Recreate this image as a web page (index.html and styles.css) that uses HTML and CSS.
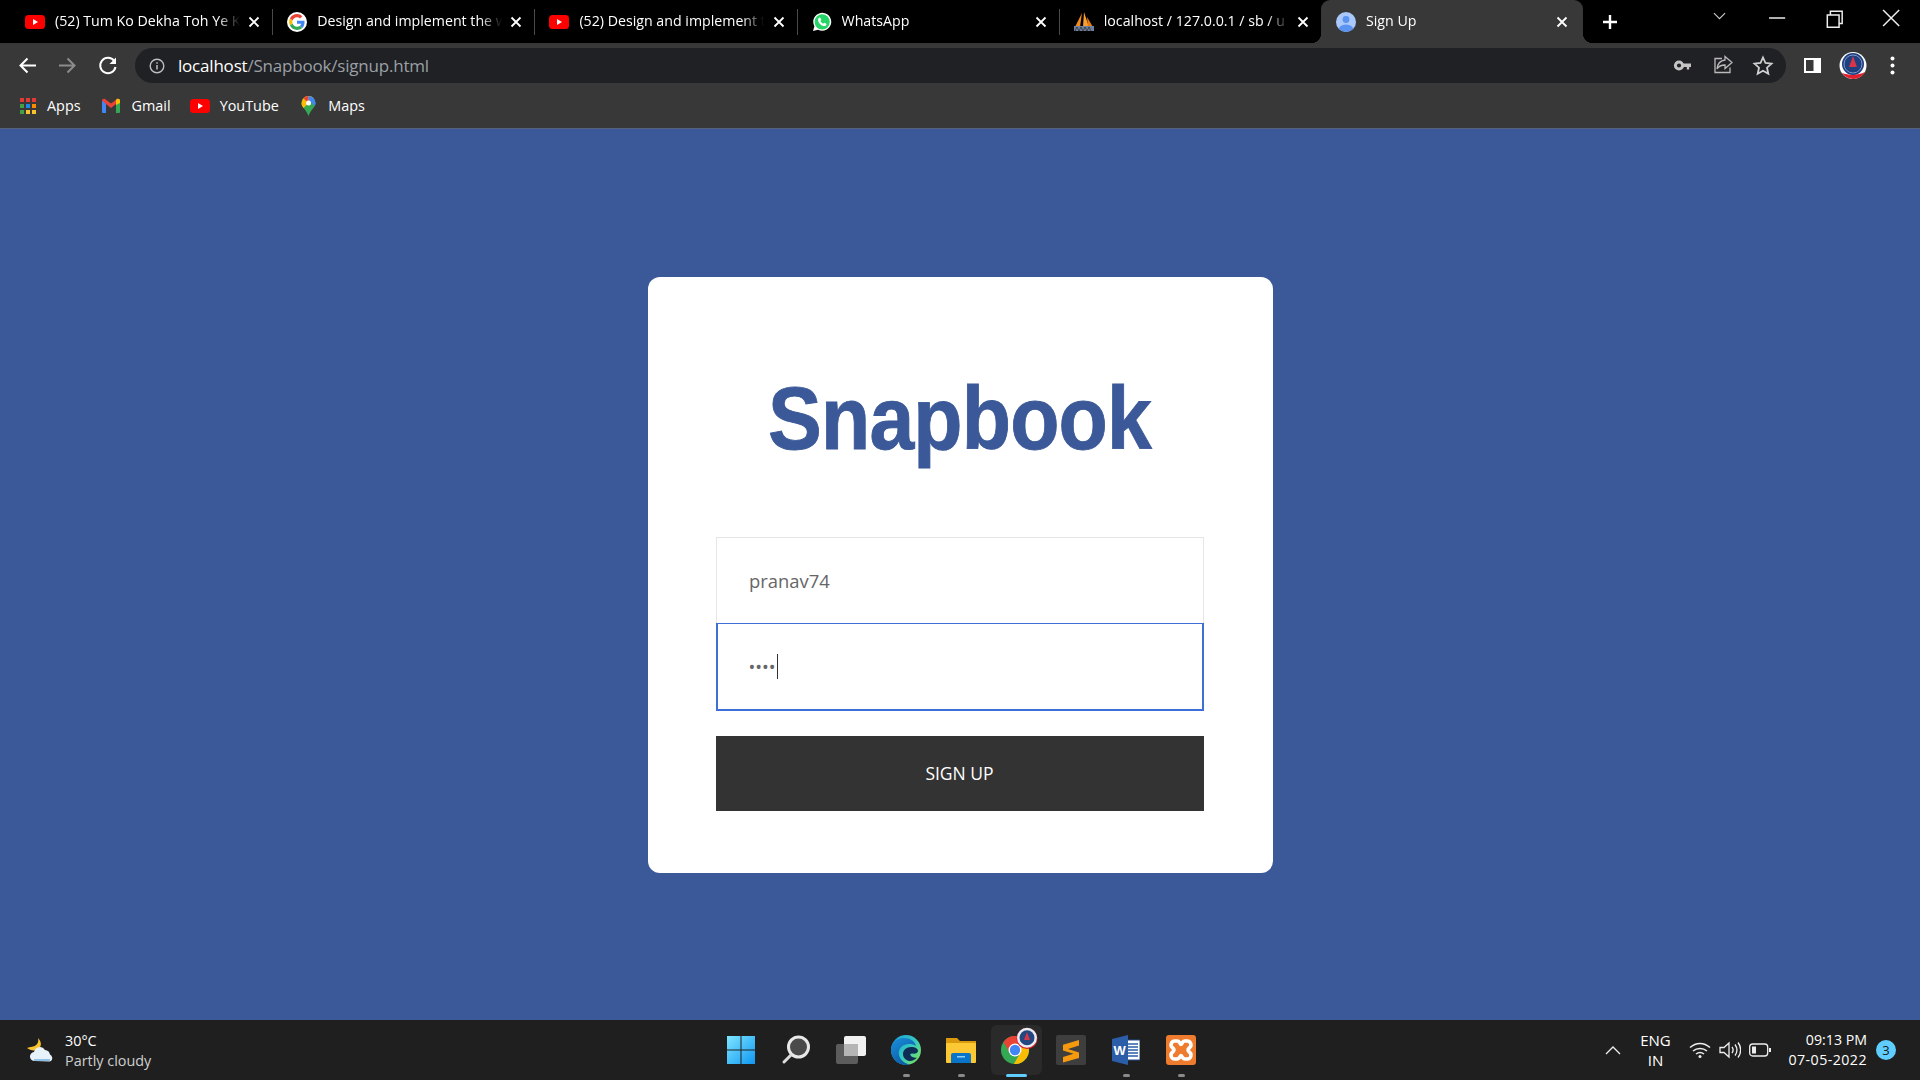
FILE: index.html
```html
<!DOCTYPE html>
<html lang="en">
<head>
<meta charset="utf-8">
<title>Sign Up</title>
<link rel="stylesheet" href="styles.css">
</head>
<body>
<svg class="defs" aria-hidden="true">
  <symbol id="yt" viewBox="0 0 20 14"><rect width="20" height="14" rx="3.5" fill="#f00"/><path d="M8 4l5 3-5 3z" fill="#fff"/></symbol>
  <symbol id="x" viewBox="0 0 12 12"><path d="M1.5 1.5l9 9M10.5 1.5l-9 9" stroke="#fff" stroke-width="1.8" fill="none"/></symbol>
</svg>

<header class="tabstrip">
  <div class="tab">
    <svg class="fav"><use href="#yt" y="3" width="20" height="14"/></svg>
    <span class="tab-title">(52) Tum Ko Dekha Toh Ye K</span>
    <svg class="tab-x"><use href="#x"/></svg>
  </div>
  <div class="tab">
    <svg class="fav" viewBox="0 0 48 48"><circle cx="24" cy="24" r="24" fill="#fff"/><g transform="translate(5 5) scale(.79)"><path fill="#EA4335" d="M24 9.5c3.54 0 6.71 1.22 9.21 3.6l6.85-6.85C35.9 2.38 30.47 0 24 0 14.62 0 6.51 5.38 2.56 13.22l7.98 6.19C12.43 13.72 17.74 9.5 24 9.5z"/><path fill="#4285F4" d="M46.98 24.55c0-1.57-.15-3.09-.38-4.55H24v9.02h12.94c-.58 2.96-2.26 5.48-4.78 7.18l7.73 6c4.51-4.18 7.09-10.36 7.09-17.65z"/><path fill="#FBBC05" d="M10.53 28.59c-.48-1.45-.76-2.99-.76-4.59s.27-3.14.76-4.59l-7.98-6.19C.92 16.46 0 20.12 0 24c0 3.88.92 7.54 2.56 10.78l7.97-6.19z"/><path fill="#34A853" d="M24 48c6.48 0 11.93-2.13 15.89-5.81l-7.73-6c-2.15 1.45-4.92 2.3-8.16 2.3-6.26 0-11.57-4.22-13.47-9.91l-7.98 6.19C6.51 42.62 14.62 48 24 48z"/></g></svg>
    <span class="tab-title">Design and implement the w</span>
    <svg class="tab-x"><use href="#x"/></svg>
  </div>
  <div class="tab">
    <svg class="fav"><use href="#yt" y="3" width="20" height="14"/></svg>
    <span class="tab-title">(52) Design and implement t</span>
    <svg class="tab-x"><use href="#x"/></svg>
  </div>
  <div class="tab">
    <svg class="fav" viewBox="0 0 20 20"><path d="M1 19l1.4-4.8A9 9 0 1 1 6 17.7z" fill="#fff"/><circle cx="10.2" cy="9.8" r="7.6" fill="#25d366"/><path d="M7.6 5.6c-.5 0-1.5.8-1.5 2.3 0 2.800 3.300 6.100 6.100 6.100 1.500 0 2.300-1 2.300-1.600 0-.6-1.900-1.600-2.300-1.600-.4 0-.8.900-1.100.9-.8-.1-2.500-1.800-2.600-2.600 0-.3.800-.7.800-1.100 0-.5-1-2.400-1.700-2.400z" fill="#fff"/></svg>
    <span class="tab-title">WhatsApp</span>
    <svg class="tab-x"><use href="#x"/></svg>
  </div>
  <div class="tab">
    <svg class="fav" viewBox="0 0 20 20"><path d="M8 1L1 15h5z" fill="#f08a1d"/><path d="M10 0l-1 15h6z" fill="#f9a030"/><path d="M13 5l1 10h5z" fill="#e57a12"/><rect y="14" width="20" height="5" fill="#6d7f9f"/><path d="M1 19l2-4 2 4 2-4 2 4 2-4 2 4 2-4 2 4" stroke="#333" stroke-width=".8" fill="none"/></svg>
    <span class="tab-title">localhost / 127.0.0.1 / sb / u</span>
    <svg class="tab-x"><use href="#x"/></svg>
  </div>
  <div class="tab tab-active">
    <svg class="fav" viewBox="0 0 20 20"><defs><clipPath id="c"><circle cx="10" cy="10" r="10"/></clipPath></defs><circle cx="10" cy="10" r="10" fill="#aac8fa"/><g clip-path="url(#c)" fill="#5a93f0"><circle cx="10" cy="7.500" r="3.400"/><ellipse cx="10" cy="18" rx="7.500" ry="5.500"/></g></svg>
    <span class="tab-title">Sign Up</span>
    <svg class="tab-x"><use href="#x"/></svg>
  </div>
  <svg class="newtab" viewBox="0 0 16 16"><path d="M8 1v14M1 8h14" stroke="#fff" stroke-width="2.400"/></svg>
  <div class="win-controls">
    <svg class="win-btn" viewBox="0 0 46 24"><path d="M18.500 8l4.500 4.500L27.500 8" stroke="#ccc" fill="none" stroke-width=".9"/></svg>
    <svg class="win-btn" viewBox="0 0 46 24"><path d="M17 12h13" stroke="#eee" fill="none" stroke-width="1.200"/></svg>
    <svg class="win-btn" viewBox="0 0 46 24"><path d="M18 9.500h9.500v10H18zM20.500 9.500V6.500H30v10h-2.500" stroke="#eee" fill="none" stroke-width="1.200"/></svg>
    <svg class="win-btn" viewBox="0 0 46 24"><path d="M17 5.500l13 13M30 5.500l-13 13" stroke="#eee" fill="none" stroke-width="1.200"/></svg>
  </div>
</header>

<section class="toolbar">
  <div class="navrow">
    <svg class="nav-btn" viewBox="0 0 40 35"><path d="M28 17.500H13M19.500 10.500l-7 7 7 7" stroke="#fff" stroke-width="2" fill="none"/></svg>
    <svg class="nav-btn" viewBox="0 0 40 35"><path d="M11 17.500h15M19.500 10.500l7 7-7 7" stroke="#8c8c8c" stroke-width="2" fill="none"/></svg>
    <svg class="nav-btn" viewBox="0 0 40 35"><path d="M26.200 13a7.700 7.700 0 1 0 1.300 6" stroke="#fff" stroke-width="2" fill="none"/><path d="M28 9.500v6.500h-6.500z" fill="#fff"/></svg>
    <div class="omnibox">
      <svg class="info" viewBox="0 0 16 16"><circle cx="8" cy="8" r="6.800" stroke="#bdbdbd" stroke-width="1.400" fill="none"/><path d="M8 7v4.500M8 4.200v1.600" stroke="#bdbdbd" stroke-width="1.500"/></svg>
      <span class="url"><span class="url-host">localhost</span>/Snapbook/signup.html</span>
      <span class="omni-spacer"></span>
      <svg class="omni-btn" viewBox="0 0 40 35"><circle cx="16" cy="17.500" r="3.600" stroke="#c4c4c4" stroke-width="3" fill="none"/><path d="M19 15.500h9v3.500h-1.800v2.500h-2.400V19H19z" fill="#c4c4c4"/></svg>
      <svg class="omni-btn" viewBox="0 0 40 35"><path d="M19 10.500H12v14h15v-5" stroke="#bbb" stroke-width="1.300" fill="none"/><path d="M22 8.500l7 6-7 6v-3.500c-4 0-6.500 1.500-8 4 .5-5 3.500-8.500 8-9z" stroke="#bbb" stroke-width="1.300" fill="none"/></svg>
      <svg class="omni-btn" viewBox="0 0 40 35"><path d="M20 9.500l2.500 5.500 6 .7-4.500 4 1.300 6-5.300-3-5.300 3 1.300-6-4.500-4 6-.7z" stroke="#d0d0d0" stroke-width="1.800" fill="none"/></svg>
    </div>
    <svg class="tool-btn" viewBox="0 0 40 35"><rect x="11" y="10" width="17" height="15" fill="#fff"/><rect x="13" y="12" width="7.500" height="11" fill="#383838"/></svg>
    <svg class="tool-btn" viewBox="0 0 40 35"><circle cx="20" cy="17.500" r="13.500" fill="#fff"/><path d="M9 25a13.500 13.500 0 0 0 23-1c-6 3-15 4-23 1z" fill="#e1202f"/><circle cx="20" cy="16" r="11" fill="#1f3f7e"/><path d="M20 8l4 11h-8z" fill="#d8344a"/><circle cx="20" cy="16" r="9" stroke="#7d98c9" stroke-width="1" fill="none"/></svg>
    <svg class="tool-btn" viewBox="0 0 40 35"><circle cx="19.500" cy="10.500" r="2" fill="#fff"/><circle cx="19.500" cy="17.500" r="2" fill="#fff"/><circle cx="19.500" cy="24.500" r="2" fill="#fff"/></svg>
  </div>
  <nav class="bookmarks">
    <a class="bm">
      <svg class="bm-icon" viewBox="0 0 18 18"><path fill="#e53935" d="M1 1h4v4H1zM7 1h4v4H7zM13 1h4v4h-4z"/><path fill="#43a047" d="M1 7h4v4H1z"/><path fill="#1e88e5" d="M7 7h4v4H7z"/><path fill="#fb8c00" d="M13 7h4v4h-4z"/><path fill="#43a047" d="M1 13h4v4H1z"/><path fill="#fbc02d" d="M7 13h4v4H7zM13 13h4v4h-4z"/></svg>
      Apps
    </a>
    <a class="bm bm-gmail">
      <svg class="bm-icon" viewBox="0 0 18 18"><path fill="#4285f4" d="M0 4h4v12H1a1 1 0 0 1-1-1z"/><path fill="#34a853" d="M14 4h4v11a1 1 0 0 1-1 1h-3z"/><path fill="#ea4335" d="M0 3.500c0-1.500 1.800-2.300 3-1.400l6 4.500 6-4.500c1.200-.9 3-.1 3 1.400L14 7 9 11 4 7z"/><path fill="#fbbc04" d="M14 2.800l1-.7c1.200-.9 3-.1 3 1.400V6l-4 2z"/></svg>
      Gmail
    </a>
    <a class="bm bm-yt">
      <svg class="bm-icon bm-wide"><use href="#yt" y="2" width="20" height="14"/></svg>
      YouTube
    </a>
    <a class="bm">
      <svg class="bm-icon bm-map" viewBox="0 0 14 20"><path d="M7 0a7 7 0 0 1 7 7c0 4-4.500 6.500-7 13-2.500-6.500-7-9-7-13a7 7 0 0 1 7-7z" fill="#34a853"/><path d="M2 2.200A7 7 0 0 1 12 2L2 12C.5 10.500 0 8.500 0 7a7 7 0 0 1 2-4.800z" fill="#fbbc04"/><path d="M2 2.200A7 7 0 0 1 7 0v4.500a2.500 2.500 0 0 0-2 1z" fill="#ea4335"/><path d="M7 0a7 7 0 0 1 7 7c0 1-.3 2-.8 3L9 5.500A2.500 2.500 0 0 0 7 4.500z" fill="#4285f4"/><circle cx="7" cy="7" r="2.500" fill="#fff"/></svg>
      Maps
    </a>
  </nav>
</section>

<main class="page">
  <form class="card">
    <div class="logo"><span class="logo-text">Snapbook</span></div>
    <input class="field" type="text" value="pranav74" aria-label="Username">
    <div class="field-wrap">
      <input class="field field-focus" type="password" value="pass" aria-label="Password">
      <span class="caret"></span>
    </div>
    <button class="submit" type="button">SIGN UP</button>
  </form>
</main>

<footer class="taskbar">
  <div class="weather">
    <svg class="weather-icon" viewBox="0 0 28 26"><path d="M11 1c1 5-1 8-7 9 0 0-2 .3-4 1 3 2 6 3 9 2 5-1 7-7 2-12z" fill="#f8c32c"/><path d="M8 24a4.500 4.500 0 0 1-1-9 6 6 0 0 1 11-2 5.500 5.500 0 0 1 5 4.500 4 4 0 0 1 1 6.500c-.5.300-1 .5-1.500.5z" fill="#e8f2fa"/><path d="M7 23h16" stroke="#8fc0e6" stroke-width="2"/></svg>
    <div class="weather-text">
      <span class="temp">30°C</span>
      <span class="cond">Partly cloudy</span>
    </div>
  </div>
  <div class="apps">
    <div class="app">
      <svg class="app-icon" viewBox="0 0 30 30"><defs><linearGradient id="w" x1="0" y1="0" x2="1" y2="1"><stop offset="0" stop-color="#7fe6ff"/><stop offset="1" stop-color="#0f97f2"/></linearGradient></defs><path fill="url(#w)" d="M1 1h13.500v13.500H1zM15.500 1H29v13.500H15.500zM1 15.500h13.500V29H1zM15.500 15.500H29V29H15.500z"/></svg>
    </div>
    <div class="app">
      <svg class="app-icon" viewBox="0 0 30 30"><circle cx="17.500" cy="12" r="10" fill="#4a4a4a" stroke="#e8e8e8" stroke-width="3"/><path d="M10 20l-7 7" stroke="#ddd" stroke-width="3" stroke-linecap="round"/></svg>
    </div>
    <div class="app">
      <svg class="app-icon" viewBox="0 0 30 30"><rect x="0" y="9" width="22" height="20" rx="2" fill="#5c5c5c"/><rect x="8" y="1" width="22" height="20" rx="2" fill="#f1f1f1"/><rect x="8" y="9" width="14" height="12" fill="#b5b5b5"/></svg>
    </div>
    <div class="app">
      <svg class="app-icon" viewBox="0 0 30 30"><defs><linearGradient id="e2" x1="0" y1="0" x2="1" y2=".8"><stop offset="0" stop-color="#1b9fdc"/><stop offset=".6" stop-color="#36c9c0"/><stop offset="1" stop-color="#7ae25f"/></linearGradient><linearGradient id="e1" x1="0" y1="0" x2=".6" y2="1"><stop offset="0" stop-color="#1a8fdc"/><stop offset="1" stop-color="#0c59a4"/></linearGradient></defs><circle cx="15" cy="15" r="15" fill="url(#e2)"/><path d="M1 10C3 5 8 3 13 3c6 0 11 3 12 8-3-2-7-2.500-10-1.500C10 10.500 7 15 8 20c1 4.500 5 8.500 11 9.500-1.300.3-2.700.5-4 .5C6.700 30 0 23.300 0 15c0-1.700.3-3.400 1-5z" fill="url(#e1)"/><path d="M12 19c0-4 3.500-7 8-7 4 0 7 1.500 7 4 0 2-3 3-5.500 2.500-2-.3-3 .7-1.500 2.500 1.500 1.500 4 2 6 1.500-2 2.500-5 4-8 3.500-3.500-1-6-3.500-6-7z" fill="#0f2c55"/></svg>
    </div>
    <div class="app">
      <svg class="app-icon" viewBox="0 0 30 30"><path d="M0 3h11l3 3h16v6H0z" fill="#d99a0e"/><rect y="8" width="30" height="20" rx="1" fill="#fcc934"/><path d="M5 28v-8a2 2 0 0 1 2-2h16a2 2 0 0 1 2 2v8z" fill="#0a74c9"/><rect x="11" y="21" width="8" height="1.500" fill="#8fd0f5"/></svg>
    </div>
    <div class="app app-active">
      <svg class="app-icon-lg" viewBox="0 0 40 40"><circle cx="19" cy="22" r="14" fill="#34a853"/><path fill="#ea4335" d="M19 16H31.650A14 14 0 0 0 7.480 14.050L13.800 25A6 6 0 0 1 19 16z"/><path fill="#fbbc04" d="M24.200 25L17.870 35.950A14 14 0 0 0 31.650 16H19A6 6 0 0 1 24.200 25z"/><circle cx="19" cy="22" r="6.500" fill="#fff"/><circle cx="19" cy="22" r="5.200" fill="#4285f4"/><circle cx="31" cy="10.500" r="10.500" fill="#d81f2e"/><circle cx="31" cy="9.800" r="10" fill="#e9edf4"/><circle cx="31" cy="9.800" r="7.500" fill="#24477f"/><path d="M31 4l3 8h-6z" fill="#d8344a"/></svg>
    </div>
    <div class="app">
      <svg class="app-icon" viewBox="0 0 30 30"><rect width="30" height="30" rx="2" fill="#3e3e3e"/><path d="M23 5v5.500L12 14l11 3.500v5.500L7 27.500V22l10.500-3.300L7 15.500V9.800z" fill="#f59a0f"/></svg>
    </div>
    <div class="app">
      <svg class="app-icon-word" viewBox="0 0 28 30"><rect x="13" y="5" width="15" height="20" fill="#fff" stroke="#1f4d91" stroke-width="1"/><path d="M16 9h10M16 12h10M16 15h10M16 18h10M16 21h10" stroke="#2b5da8" stroke-width="1.300"/><path d="M0 4l16-4v30L0 26z" fill="#2b5da8"/><text class="word-w" x="1.500" y="19.500">W</text></svg>
    </div>
    <div class="app">
      <svg class="app-icon" viewBox="0 0 30 30"><rect width="30" height="30" rx="3" fill="#ee7b2e"/><path d="M8.500 6h2.500c3 0 3 3.500 4 3.500s1-3.500 4-3.500h2.500c2.500 0 3.500 2.500 3.500 4.500s-3 2.500-3 4.500 3 2.500 3 4.500-1 4.500-3.500 4.500H19c-3 0-3-3.500-4-3.500s-1 3.500-4 3.500H8.500C6 24 5 21.500 5 19.500s3-2.500 3-4.500-3-2.500-3-4.500S6 6 8.500 6z" fill="none" stroke="#fff" stroke-width="3.600"/></svg>
    </div>
  </div>
  <div class="tray">
    <svg class="tray-chevron" viewBox="0 0 18 12"><path d="M2 10l7-7 7 7" stroke="#eee" stroke-width="1.300" fill="none"/></svg>
    <div class="lang"><span>ENG</span><span>IN</span></div>
    <div class="status">
      <svg class="status-icon" viewBox="0 0 22 18"><path d="M1 6.500c6-5.500 14-5.500 20 0M4 10c4-3.500 10-3.500 14 0M7 13c2.500-2 5.500-2 8 0" stroke="#eee" stroke-width="1.500" fill="none"/><circle cx="11" cy="15.500" r="1.500" fill="#eee"/></svg>
      <svg class="status-icon" viewBox="0 0 22 18"><path d="M1 6.500h4l5-4.500v14l-5-4.500H1z" stroke="#eee" stroke-width="1.300" fill="none"/><path d="M13 6c1.500 2 1.500 4 0 6M16 3.500c2.500 3.500 2.500 7.500 0 11M19 1.500c3.500 4.500 3.500 10.500 0 15" stroke="#eee" stroke-width="1.300" fill="none"/></svg>
      <svg class="status-icon" viewBox="0 0 22 18"><rect x=".7" y="3" width="18" height="12" rx="3" stroke="#eee" stroke-width="1.300" fill="none"/><rect x="3" y="5.500" width="4" height="7" fill="#eee"/><rect x="20" y="7" width="2" height="4" fill="#eee"/></svg>
    </div>
    <div class="clock"><span>09:13 PM</span><span class="date">07-05-2022</span></div>
    <span class="notif">3</span>
  </div>
</footer>
</body>
</html>
```

FILE: styles.css
```css
* { box-sizing: border-box; }
html, body { height: 100%; }
body {
  margin: 0;
  display: flex;
  flex-direction: column;
  height: 1080px;
  overflow: hidden;
  font-family: "Open Sans", "Noto Sans", sans-serif;
  color: #fff;
  background: #3b5998;
}
.defs { position: absolute; width: 0; height: 0; }

/* Tab strip */
.tabstrip {
  height: 43px;
  background: #000;
  display: flex;
  align-items: center;
  padding-left: 11px;
  flex: none;
}
.tab {
  width: 262.2px;
  height: 43px;
  flex: none;
  display: flex;
  align-items: center;
  padding-left: 14px;
  padding-right: 13px;
  position: relative;
}
.tab:not(.tab-active):not(:nth-child(5))::after {
  content: "";
  position: absolute;
  right: 0;
  top: 9px;
  height: 26px;
  width: 1px;
  background: #4a4a4a;
}
.fav { width: 20px; height: 20px; flex: none; margin-right: 10px; }
.tab-title {
  flex: 1;
  min-width: 0;
  font-size: 14.2px;
  line-height: 20px;
  margin-bottom: 2px;
  white-space: nowrap;
  -webkit-mask-image: linear-gradient(to right, #000 163px, transparent 185px);
  mask-image: linear-gradient(to right, #000 163px, transparent 185px);
}
.tab-x { width: 12px; height: 12px; flex: none; }
.tab-active {
  background: #383838;
  border-radius: 9px 9px 0 0;
  width: 262px;
  padding-right: 15px;
  margin-left: -1px;
  padding-left: 15px;
}
.tab-active::before,
.tab-active::after {
  content: "";
  position: absolute;
  bottom: 0;
  width: 10px;
  height: 10px;
}
.tab-active::before { left: -10px; background: radial-gradient(circle at 0 0, #000 10px, #383838 10.500px); }
.tab-active::after { right: -10px; background: radial-gradient(circle at 100% 0, #000 10px, #383838 10.500px); }
.newtab { width: 16px; height: 16px; flex: none; margin-left: 19px; }
.win-controls { margin-left: auto; display: flex; align-self: flex-start; padding-right: 1px; }
.win-btn { width: 57px; height: 36px; flex: none; }

/* Toolbar */
.toolbar {
  flex: none;
  height: 86px;
  background: #383838;
  border-bottom: 1px solid #55607a;
  display: flex;
  flex-direction: column;
}
.navrow {
  height: 40px;
  flex: none;
  padding: 5px 7px 0 8px;
  display: flex;
}
.nav-btn, .tool-btn, .omni-btn { width: 40px; height: 35px; flex: none; }
.omnibox {
  flex: 1;
  margin: 0 7px 0 7px;
  background: #202124;
  border-radius: 18px;
  display: flex;
  align-items: center;
  padding: 0 3px 0 14px;
}
.info { width: 16px; height: 16px; flex: none; margin-right: 13px; }
.url { font-size: 17px; color: #9aa0a6; white-space: nowrap; letter-spacing: -.2px; }
.url-host { color: #fff; }
.omni-spacer { flex: 1; }
.bookmarks {
  flex: 1;
  display: flex;
  align-items: center;
  padding-left: 19px;
  font-size: 14.4px;
}
.bm { display: flex; align-items: center; margin-right: 21px; color: #fff; }
.bm-gmail { margin-right: 19px; }
.bm-gmail .bm-icon { margin-right: 12px; }
.bm-yt { margin-right: 22.5px; }
.bm-icon { width: 18px; height: 18px; flex: none; margin-right: 10px; }
.bm-wide { width: 20px; margin-right: 10px; }
.bm-map { width: 15px; height: 20px; margin-right: 12px; }

/* Page */
.page {
  flex: 1;
  display: flex;
  align-items: center;
  justify-content: center;
}
.card {
  width: 625px;
  height: 596px;
  background: #fff;
  border-radius: 12px;
  padding: 0 69px 62px 68px;
  display: flex;
  flex-direction: column;
}
.logo {
  height: 260px;
  flex: none;
  padding-top: 89px;
  display: flex;
  justify-content: center;
}
.logo-text {
  font-family: "Liberation Sans", sans-serif;
  font-weight: 700;
  font-size: 89px;
  line-height: 104px;
  height: 104px;
  color: #3b5998;
  display: inline-block;
  -webkit-text-stroke: .9px #3b5998;
  transform: scaleX(.905);
  letter-spacing: -.9px;
}
.field {
  width: 100%;
  height: 87px;
  display: block;
  border: 1px solid #e6e6e6;
  border-radius: 0;
  background: #fff;
  padding: 0 33px 0 32.5px;
  font-family: "Open Sans", sans-serif;
  font-size: 18.4px;
  color: #666;
  outline: none;
  margin: 0;
}
.field-wrap { position: relative; margin-top: -1px; flex: none; }
.field-focus { height: 88px; border: 2px solid #3e6fd6; border-top-width: 1px; padding: 2px 31px 0; letter-spacing: 0; font-size: 18px; }
.caret {
  position: absolute;
  left: 61px;
  top: 31px;
  width: 1px;
  height: 25px;
  background: #333;
}
.submit {
  margin-top: 25px;
  height: 75px;
  flex: none;
  border: 0;
  background: #333;
  color: #fff;
  font-family: "Open Sans", sans-serif;
  font-size: 17.5px;
}

/* Taskbar */
.taskbar {
  flex: none;
  height: 60px;
  background: #1f1f1f;
  display: grid;
  grid-template-columns: 1fr auto 1fr;
  align-items: center;
}
.weather { display: flex; align-items: center; padding-left: 27px; }
.weather-icon { width: 28px; height: 26px; flex: none; margin-right: 10px; }
.weather-text { display: flex; flex-direction: column; font-size: 14.4px; line-height: 20px; margin-top: 2px; }
.cond { color: #cfcfcf; }
.apps { display: flex; height: 60px; align-items: center; margin-left: 2px; }
.app {
  width: 55px;
  height: 50px;
  flex: none;
  display: flex;
  align-items: center;
  justify-content: center;
  position: relative;
  border-radius: 6px;
}
.app::after {
  content: "";
  position: absolute;
  bottom: -2px;
  left: 24px;
  width: 7px;
  height: 3px;
  border-radius: 2px;
  background: #8a8a8a;
}
.app:nth-child(-n+3)::after, .app:nth-child(7)::after { display: none; }
.app-active { background: #2a2a2a; margin: 0 2px; width: 51px; }
.app-active::after { left: 15px; width: 21px; background: #60cdff; }
.app-icon { width: 30px; height: 30px; }
.app-icon-lg { width: 40px; height: 40px; margin-top: -4px; overflow: visible; }
.app-icon-word { width: 28px; height: 30px; }
.word-w { font-family: "Liberation Sans", sans-serif; font-weight: 700; font-size: 13px; fill: #fff; }
.tray { display: flex; align-items: center; justify-content: flex-end; padding-right: 24px; font-size: 14px; }
.tray-chevron { width: 18px; height: 12px; flex: none; margin-right: 16px; }
.lang { display: flex; flex-direction: column; align-items: center; line-height: 20px; margin-right: 17px; width: 34px; font-size: 15px; }
.status { display: flex; gap: 8px; margin-right: 17px; }
.status-icon { width: 22px; height: 18px; }
.clock { display: flex; flex-direction: column; align-items: flex-end; line-height: 20px; margin-right: 9px; font-size: 14.2px; }
.date { letter-spacing: .45px; }
.notif {
  position: relative;
  width: 20px;
  height: 20px;
  border-radius: 50%;
  background: #60cdff;
  color: #1a1a1a;
  font-size: 13px;
  line-height: 20px;
  text-align: center;
}
```
